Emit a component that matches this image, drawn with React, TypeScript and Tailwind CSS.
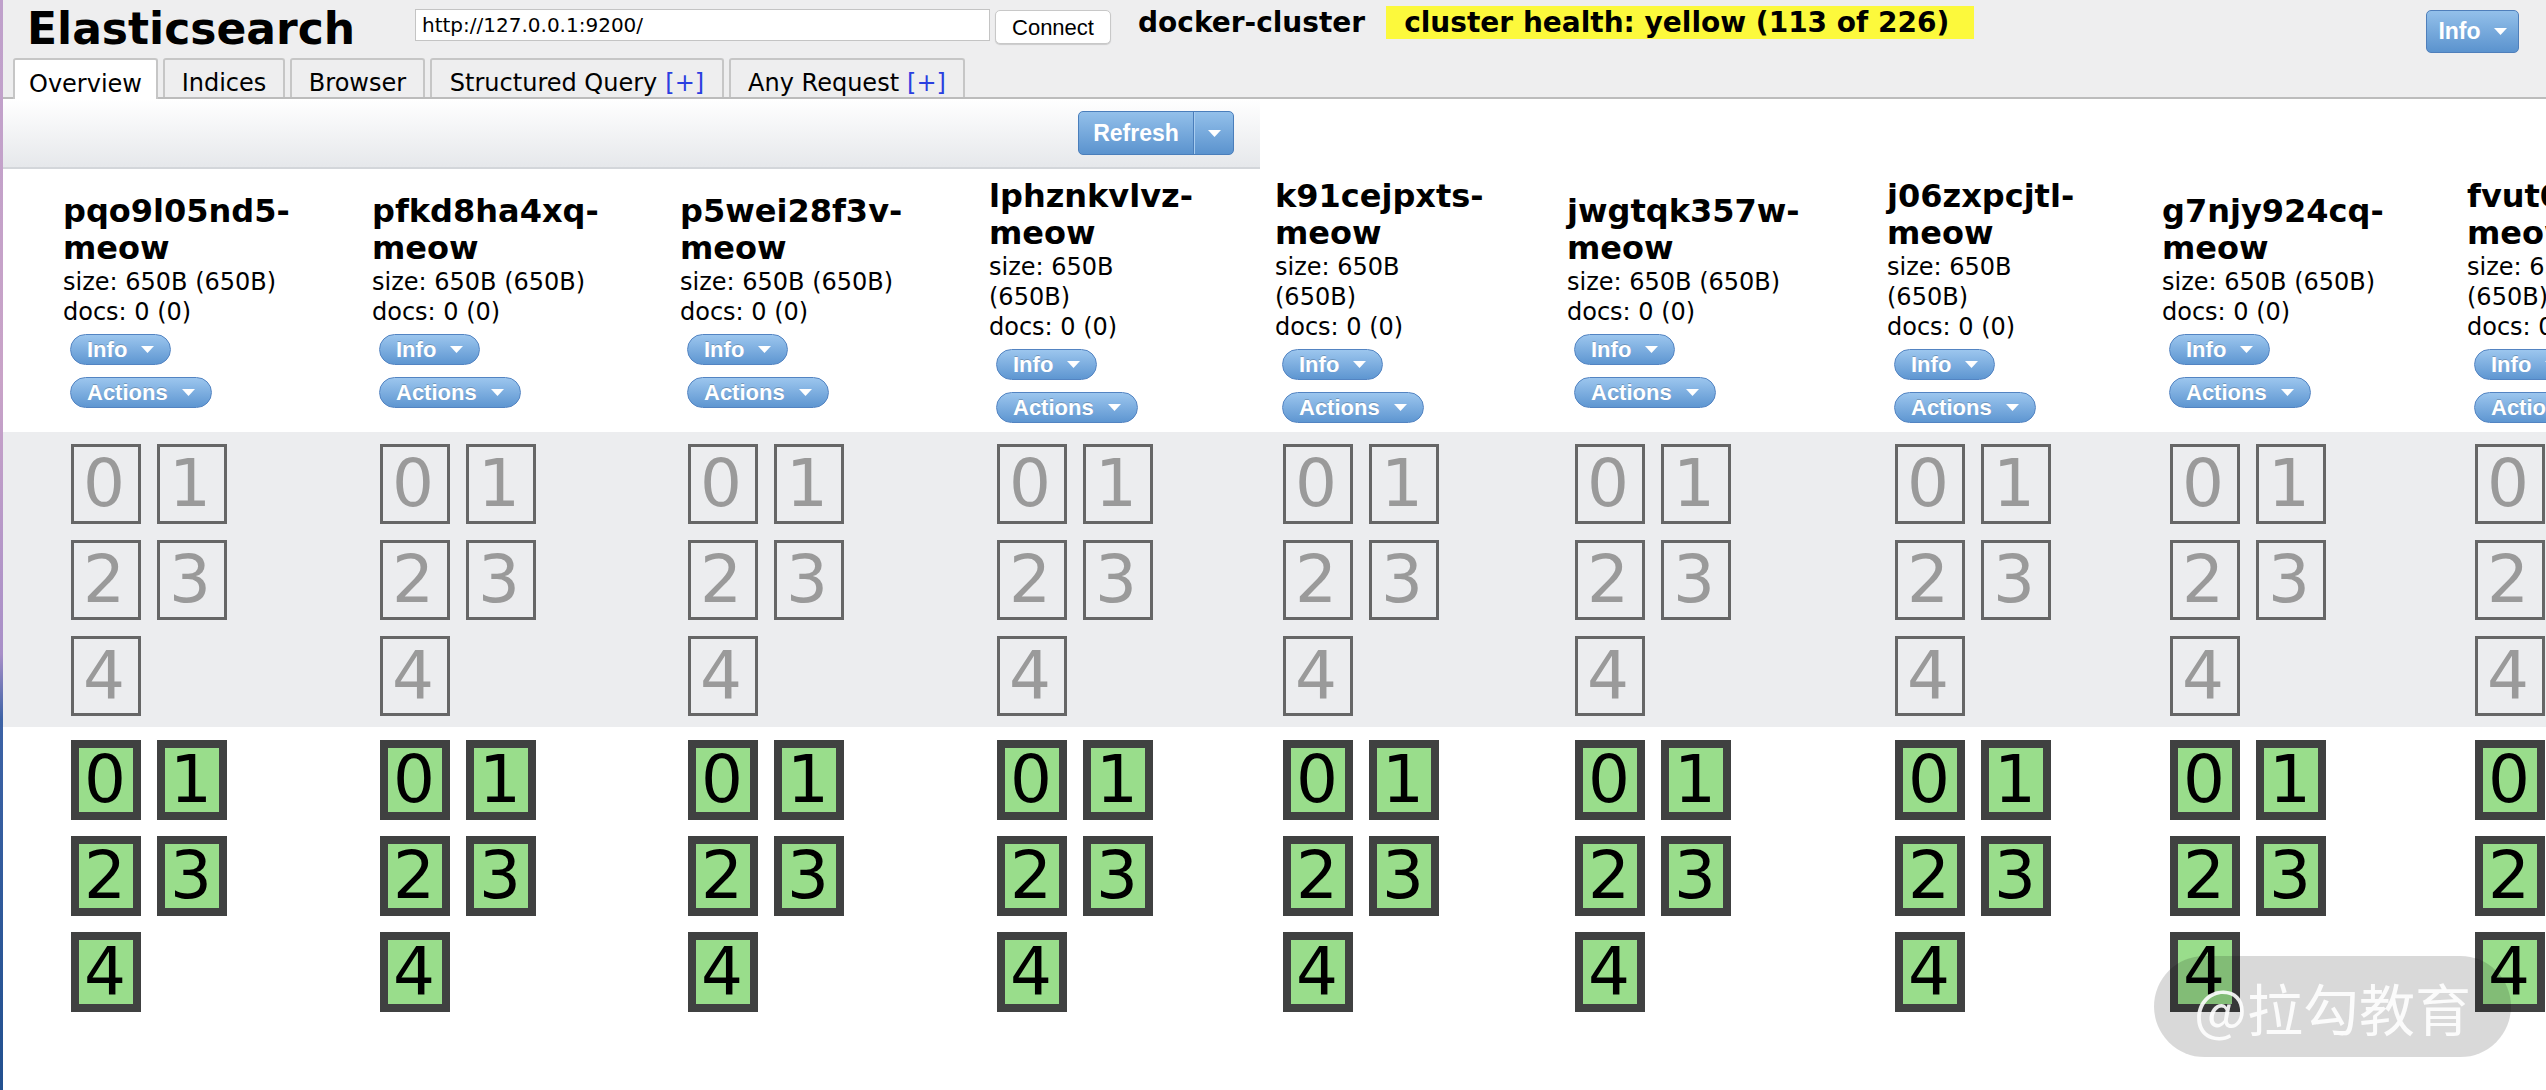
import React from "react";

const nodes = [
  { name: "pqo9l05nd5", wrap: false },
  { name: "pfkd8ha4xq", wrap: false },
  { name: "p5wei28f3v", wrap: false },
  { name: "lphznkvlvz", wrap: true },
  { name: "k91cejpxts", wrap: true },
  { name: "jwgtqk357w", wrap: false },
  { name: "j06zxpcjtl", wrap: true },
  { name: "g7njy924cq", wrap: false },
  { name: "fvut0m2ks8", wrap: true },
];

const shards = [0, 1, 2, 3, 4];

function Caret({ className = "" }: { className?: string }) {
  return (
    <svg width="13" height="7" viewBox="0 0 13 7" className={className}>
      <polygon points="0,0 13,0 6.5,7" fill="white" />
    </svg>
  );
}

function PillButton({ label, width }: { label: string; width: string }) {
  return (
    <div
      className={`${width} h-[31px] ml-[7px] flex items-center justify-between pl-[16px] pr-[16px] rounded-full border border-[#5384c2] bg-gradient-to-b from-[#9cc6ee] to-[#5e96d1] text-white font-bold text-[22px] font-['Liberation_Sans',sans-serif] [text-shadow:0_-1px_0_rgba(0,0,0,0.2)]`}
    >
      <span className="leading-none">{label}</span>
      <Caret />
    </div>
  );
}

function Tab({ label, plus, active, width }: { label: string; plus?: boolean; active?: boolean; width: string }) {
  return (
    <div
      className={`${width} flex items-center justify-center pt-[9px] border-2 border-b-0 border-[#c6c6c6] rounded-t-[3px] text-[24px] text-black ${
        active ? "h-[41px] -mb-[2px] bg-white relative" : "h-[39px] bg-[#eeeeef]"
      }`}
    >
      <span className="whitespace-nowrap">
        {label}
        {plus && <span className="ml-[8px] text-[#2b3fe0]">[+]</span>}
      </span>
    </div>
  );
}

export default function App() {
  return (
    <div className="relative w-[2546px] h-[1090px] overflow-hidden bg-white flex font-['DejaVu_Sans',sans-serif]">
      {/* desktop edge */}
      <div className="w-[3px] h-full shrink-0 bg-[linear-gradient(to_bottom,#bfa0cb_0%,#c9a3c8_35%,#a88fc8_60%,#3d63a6_66%,#22508f_100%)]" />

      <div className="flex-1 min-w-0 flex flex-col">
        {/* header */}
        <div className="bg-[#eeeeef] border-b-2 border-[#bcbcbc]">
          <div className="h-[58px] flex items-start">
            <div className="w-[412px] pl-[24px] pt-[7px] text-[44px] leading-none font-bold text-black">Elasticsearch</div>
            <div className="mt-[9px] w-[575px] h-[32px] bg-white border border-[#c4c4c4] pl-[6px] flex items-center text-[20px] text-black">
              http://127.0.0.1:9200/
            </div>
            <div className="ml-[5px] mt-[10px] w-[116px] h-[34px] bg-white border border-[#c8c8c8] rounded-[5px] flex items-center justify-center text-[22px] text-black font-['Liberation_Sans',sans-serif] shadow-[0_1px_1px_rgba(0,0,0,0.15)]">
              Connect
            </div>
            <div className="ml-[27px] mt-[9px] text-[28px] leading-none font-bold text-black">docker-cluster</div>
            <div className="ml-[21px] mt-[6px] h-[33px] leading-[33px] pl-[18px] pr-[25px] bg-[#fcf93c] text-[28px] font-bold text-black">
              cluster health: yellow (113 of 226)
            </div>
            <div className="ml-auto mr-[27px] mt-[10px] w-[93px] h-[43px] rounded-[5px] border border-[#4f7fbb] bg-gradient-to-b from-[#93c0ea] to-[#5b93ce] flex items-center justify-center gap-[13px] text-white font-bold text-[23px] font-['Liberation_Sans',sans-serif]">
              <span>Info</span>
              <Caret />
            </div>
          </div>
          <div className="h-[39px] flex items-end gap-[5px] pl-[10px]">
            <Tab label="Overview" active width="w-[145px]" />
            <Tab label="Indices" width="w-[122px]" />
            <Tab label="Browser" width="w-[135px]" />
            <Tab label="Structured Query" plus width="w-[294px]" />
            <Tab label="Any Request" plus width="w-[236px]" />
          </div>
        </div>

        {/* toolbar */}
        <div className="w-[1257px] h-[70px] shrink-0 flex items-center justify-end pr-[26px] bg-gradient-to-b from-white to-[#e6e8eb] border-b-2 border-[#d3d6da]">
          <div className="h-[44px] flex rounded-[5px] border border-[#4a7ebb] bg-gradient-to-b from-[#93c0ea] to-[#5b93ce] text-white font-bold text-[23px] font-['Liberation_Sans',sans-serif]">
            <div className="w-[115px] flex items-center justify-center border-r border-[#4a7ebb]">Refresh</div>
            <div className="w-[39px] flex items-center justify-center border-l border-[#a8cdf0]">
              <Caret />
            </div>
          </div>
        </div>

        {/* cluster overview grid */}
        <div className="grid grid-cols-[60px_309px_308px_309px_286px_292px_320px_275px_305px_200px]">
          <div className="h-[263px]" />
          {nodes.map((n) => (
            <div key={n.name} className="h-[263px] flex flex-col justify-center text-black">
              <div className="text-[32px] leading-[37px] font-bold">
                <div>{n.name}-</div>
                <div>meow</div>
              </div>
              <div className="text-[24px] leading-[30px]">
                {n.wrap ? (
                  <>
                    <div>size: 650B</div>
                    <div>(650B)</div>
                  </>
                ) : (
                  <div className="whitespace-nowrap">size: 650B (650B)</div>
                )}
                <div className="whitespace-nowrap">docs: 0 (0)</div>
              </div>
              <div className="mt-[7px]">
                <PillButton label="Info" width="w-[101px]" />
              </div>
              <div className="mt-[12px]">
                <PillButton label="Actions" width="w-[142px]" />
              </div>
            </div>
          ))}

          <div className="bg-[#ecedef]" />
          {nodes.map((n) => (
            <div key={n.name + "-u"} className="bg-[#ecedef] pt-[12px] pb-[11px]">
              <div className="ml-[8px] grid grid-cols-[70px_70px] gap-[16px]">
                {shards.map((s) => (
                  <div
                    key={s}
                    className="w-[70px] h-[80px] border-[3px] border-[#666666] flex items-center justify-center pr-[4px] text-[66px] leading-none text-[#9a9a9a]"
                  >
                    {s}
                  </div>
                ))}
              </div>
            </div>
          ))}

          <div />
          {nodes.map((n) => (
            <div key={n.name + "-s"} className="pt-[13px]">
              <div className="ml-[8px] grid grid-cols-[70px_70px] gap-[16px]">
                {shards.map((s) => (
                  <div
                    key={s}
                    className="w-[70px] h-[80px] border-[8px] border-[#404141] bg-[#99dd8b] flex items-center justify-center pr-[2px] text-[66px] leading-none text-black"
                  >
                    {s}
                  </div>
                ))}
              </div>
            </div>
          ))}
        </div>
      </div>

      {/* watermark */}
      <div className="absolute right-[35px] bottom-[33px] w-[357px] h-[101px] rounded-full bg-black/15 flex items-center justify-center text-[56px] text-white/90 font-['Noto_Sans_CJK_SC',sans-serif]">
        @拉勾教育
      </div>
    </div>
  );
}
